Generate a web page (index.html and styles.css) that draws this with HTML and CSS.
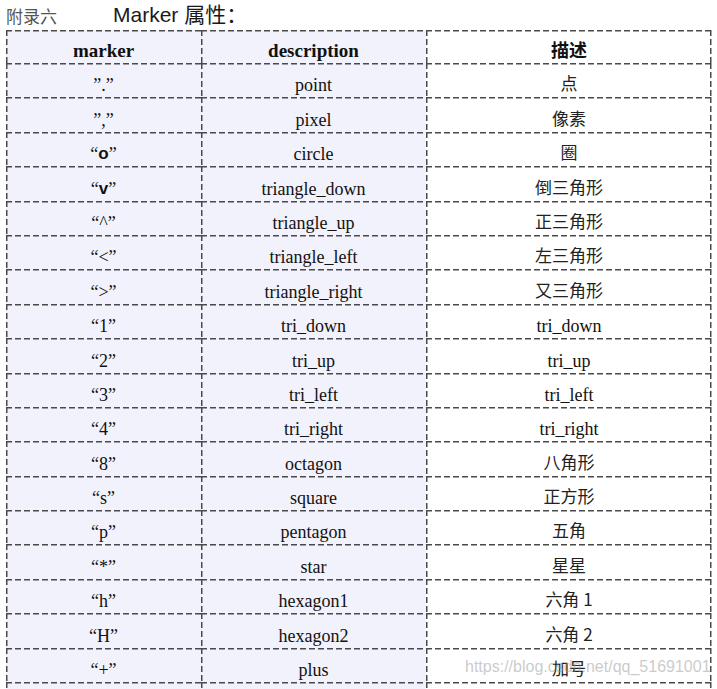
FILE: index.html
```html
<!DOCTYPE html>
<html lang="zh">
<head>
<meta charset="utf-8">
<title>Marker 属性</title>
<link rel="stylesheet" href="styles.css">
</head>
<body>
<div class="page">
  <div class="title">
    <span class="appendix">附录六</span>
    <span class="heading">Marker 属性：</span>
  </div>
  <div class="table">
    <div class="cell c1 head">marker</div>
    <div class="cell c2 head">description</div>
    <div class="cell c3 head cjk">描述</div>

    <div class="cell c1">”.”</div><div class="cell c2">point</div><div class="cell c3 cjk">点</div>
    <div class="cell c1">”,”</div><div class="cell c2">pixel</div><div class="cell c3 cjk">像素</div>
    <div class="cell c1">“<span class="sym">o</span>”</div><div class="cell c2">circle</div><div class="cell c3 cjk">圈</div>
    <div class="cell c1">“<span class="sym">v</span>”</div><div class="cell c2">triangle_down</div><div class="cell c3 cjk">倒三角形</div>
    <div class="cell c1">“^”</div><div class="cell c2">triangle_up</div><div class="cell c3 cjk">正三角形</div>
    <div class="cell c1">“&lt;”</div><div class="cell c2">triangle_left</div><div class="cell c3 cjk">左三角形</div>
    <div class="cell c1">“&gt;”</div><div class="cell c2">triangle_right</div><div class="cell c3 cjk">又三角形</div>
    <div class="cell c1">“1”</div><div class="cell c2">tri_down</div><div class="cell c3">tri_down</div>
    <div class="cell c1">“2”</div><div class="cell c2">tri_up</div><div class="cell c3">tri_up</div>
    <div class="cell c1">“3”</div><div class="cell c2">tri_left</div><div class="cell c3">tri_left</div>
    <div class="cell c1">“4”</div><div class="cell c2">tri_right</div><div class="cell c3">tri_right</div>
    <div class="cell c1">“8”</div><div class="cell c2">octagon</div><div class="cell c3 cjk">八角形</div>
    <div class="cell c1">“s”</div><div class="cell c2">square</div><div class="cell c3 cjk">正方形</div>
    <div class="cell c1">“p”</div><div class="cell c2">pentagon</div><div class="cell c3 cjk">五角</div>
    <div class="cell c1">“*”</div><div class="cell c2">star</div><div class="cell c3 cjk">星星</div>
    <div class="cell c1">“h”</div><div class="cell c2">hexagon1</div><div class="cell c3 cjk">六角 1</div>
    <div class="cell c1">“H”</div><div class="cell c2">hexagon2</div><div class="cell c3 cjk">六角 2</div>
    <div class="cell c1">“+”</div><div class="cell c2">plus</div><div class="cell c3 cjk">加号</div>
    <div class="cell c1"></div><div class="cell c2"></div><div class="cell c3"></div>
  </div>
  <div class="watermark">https://blog.csdn.net/qq_51691001</div>
</div>
</body>
</html>
```

FILE: styles.css
```css
html, body {
  margin: 0;
  padding: 0;
  background: #ffffff;
}

.page {
  position: relative;
  width: 717px;
  height: 689px;
  overflow: hidden;
  padding-left: 6px;
  box-sizing: border-box;
}

.title {
  height: 30px;
  display: flex;
  align-items: flex-end;
  padding-bottom: 5px;
  box-sizing: border-box;
}

.appendix {
  font-family: "Noto Sans CJK SC", sans-serif;
  font-size: 17px;
  color: #555;
  line-height: 18px;
  width: 107px;
}

.heading {
  font-family: "Liberation Sans", "Noto Sans CJK SC", sans-serif;
  font-size: 21px;
  color: #1a1a1a;
  line-height: 24px;
  position: relative;
  top: 2px;
}

.table {
  display: grid;
  grid-template-columns: 195px 225px 286px;
  grid-template-rows: 33px repeat(19, 34.4px);
}

.cell {
  display: flex;
  align-items: flex-end;
  justify-content: center;
  padding-bottom: 2px;
  box-sizing: border-box;
  font-family: "Liberation Serif", serif;
  font-size: 18px;
  line-height: 20px;
  color: #111;
  background-image:
    repeating-linear-gradient(90deg, #4a4a4a 0 6px, transparent 6px 9px),
    repeating-linear-gradient(180deg, #4a4a4a 0 6px, transparent 6px 9px);
  background-size: 100% 1.5px, 1.5px 100%;
  background-position: left top, left top;
  background-repeat: no-repeat;
}

.c1, .c2 {
  background-color: #f2f2fc;
}

.c3 {
  background-color: #ffffff;
  background-image:
    repeating-linear-gradient(90deg, #4a4a4a 0 6px, transparent 6px 9px),
    repeating-linear-gradient(180deg, #4a4a4a 0 6px, transparent 6px 9px),
    repeating-linear-gradient(180deg, #4a4a4a 0 6px, transparent 6px 9px);
  background-size: 100% 1.5px, 1.5px 100%, 1.5px 100%;
  background-position: left top, left top, right 1px top;
  background-repeat: no-repeat;
}

.sym {
  font-family: "Liberation Sans", sans-serif;
  font-weight: bold;
  font-size: 17px;
}

.head {
  font-weight: bold;
  font-size: 19px;
}

.cjk {
  font-family: "Noto Sans CJK SC", sans-serif;
  font-size: 17px;
  padding-bottom: 4px;
  color: #222;
}

.head.cjk {
  font-size: 18px;
  color: #111;
}

.watermark {
  position: absolute;
  left: 465px;
  top: 658px;
  font-family: "Liberation Sans", sans-serif;
  font-size: 16px;
  color: rgba(150, 150, 150, 0.5);
  white-space: nowrap;
}
```
